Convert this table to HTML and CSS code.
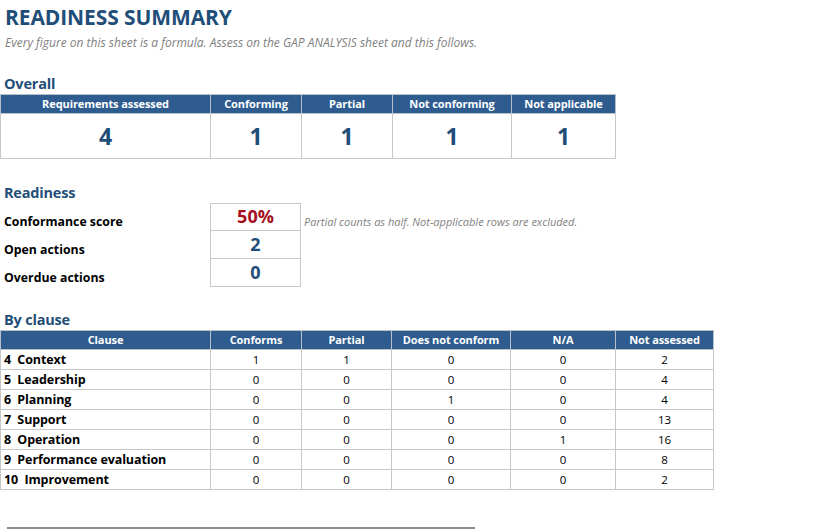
FILE: index.html
```html
<!DOCTYPE html>
<html>
<head>
<meta charset="utf-8">
<link rel="stylesheet" href="styles.css">
</head>
<body>
<main class="sheet">
  <h1 class="title">READINESS SUMMARY</h1>
  <p class="subtitle">Every figure on this sheet is a formula. Assess on the GAP ANALYSIS sheet and this follows.</p>

  <h2 class="section">Overall</h2>
  <table class="overall">
    <colgroup><col class="c210"><col class="c91"><col class="c91"><col class="c119"><col class="c104"></colgroup>
    <thead>
      <tr><th>Requirements assessed</th><th>Conforming</th><th>Partial</th><th>Not conforming</th><th>Not applicable</th></tr>
    </thead>
    <tbody>
      <tr><td>4</td><td>1</td><td>1</td><td>1</td><td>1</td></tr>
    </tbody>
  </table>

  <h2 class="section section-readiness">Readiness</h2>
  <div class="readiness">
    <div class="r-label">Conformance score</div>
    <div class="r-value r-score">50%</div>
    <div class="r-note">Partial counts as half. Not-applicable rows are excluded.</div>
    <div class="r-label">Open actions</div>
    <div class="r-value">2</div>
    <div class="r-note"></div>
    <div class="r-label">Overdue actions</div>
    <div class="r-value">0</div>
    <div class="r-note"></div>
  </div>

  <h2 class="section section-clause">By clause</h2>
  <table class="clause">
    <colgroup><col class="c210"><col class="c91"><col class="c90"><col class="c119"><col class="c105"><col class="c98"></colgroup>
    <thead>
      <tr><th>Clause</th><th>Conforms</th><th>Partial</th><th>Does not conform</th><th>N/A</th><th>Not assessed</th></tr>
    </thead>
    <tbody>
      <tr><td>4&nbsp; Context</td><td>1</td><td>1</td><td>0</td><td>0</td><td>2</td></tr>
      <tr><td>5&nbsp; Leadership</td><td>0</td><td>0</td><td>0</td><td>0</td><td>4</td></tr>
      <tr><td>6&nbsp; Planning</td><td>0</td><td>0</td><td>1</td><td>0</td><td>4</td></tr>
      <tr><td>7&nbsp; Support</td><td>0</td><td>0</td><td>0</td><td>0</td><td>13</td></tr>
      <tr><td>8&nbsp; Operation</td><td>0</td><td>0</td><td>0</td><td>1</td><td>16</td></tr>
      <tr><td>9&nbsp; Performance evaluation</td><td>0</td><td>0</td><td>0</td><td>0</td><td>8</td></tr>
      <tr><td>10&nbsp; Improvement</td><td>0</td><td>0</td><td>0</td><td>0</td><td>2</td></tr>
    </tbody>
  </table>

  <div class="scrollbar"></div>
</main>
</body>
</html>
```

FILE: styles.css
```css
* { box-sizing: border-box; }
html, body { margin: 0; padding: 0; background: #fff; }
body { font-family: "Open Sans", sans-serif; color: #000; }

.sheet { width: 819px; height: 529px; display: flex; flex-direction: column; overflow: hidden; }

.title {
  margin: 0; padding-left: 5px;
  height: 34px; line-height: 35px;
  font-size: 21px; font-weight: 700; color: #1F4E79; letter-spacing: -0.1px;
}
.subtitle {
  margin: 0; padding-left: 5px;
  height: 18px; line-height: 18px;
  font-size: 12px; font-style: italic; color: #7F7F7F;
}
.section {
  margin: 22px 0 0 0; padding-left: 4px;
  height: 20px; line-height: 20px;
  font-size: 14.5px; font-weight: 700; color: #1F4E79; letter-spacing: -0.2px;
}
.section-readiness { margin-top: 24px; }
.section-clause { margin-top: 23px; }

table { border-collapse: collapse; table-layout: fixed; }
.c210 { width: 210px; }
.c91 { width: 91px; }
.c90 { width: 90px; }
.c119 { width: 119px; }
.c104 { width: 104px; }
.c105 { width: 105px; }
.c98 { width: 98px; }

th {
  background: #2E5C8F; color: #fff; font-weight: 700;
  font-size: 11px; height: 19px; padding: 0 0 1px 0; text-align: center;
  border: 1px solid #B7BFC9; letter-spacing: -0.1px; line-height: 16px;
}
td { border: 1px solid #C8C8C8; padding: 0; text-align: center; }

.overall { width: 616px; }
.overall td {
  height: 45px; font-size: 23px; font-weight: 700; color: #1F4E79;
}

.readiness {
  display: grid;
  grid-template-columns: 210px 91px 1fr;
  grid-auto-rows: 28px;
}
.r-label {
  padding-left: 4px; font-size: 12.3px; font-weight: 700;
  line-height: 28px; padding-top: 5px;
}
.r-value {
  border: 1px solid #C8C8C8; border-top: none;
  text-align: center; font-size: 18px; font-weight: 700; color: #1F4E79;
  line-height: 26px;
}
.r-value.r-score { border-top: 1px solid #C8C8C8; color: #A50F21; line-height: 24px; }
.r-note {
  padding-left: 3px; font-size: 11px; font-style: italic; color: #7F7F7F;
  line-height: 28px; padding-top: 5px;
}

.clause { width: 714px; }
.clause td {
  height: 20px; font-size: 11.5px; color: #000;
}
.clause td:first-child { text-align: left; padding-left: 3px; font-weight: 700; font-size: 12.5px; letter-spacing: -0.1px; }

.scrollbar {
  margin-top: auto; margin-left: 7px; width: 468px; height: 2px;
  background: #8C8C8C; margin-bottom: 0;
}
```
